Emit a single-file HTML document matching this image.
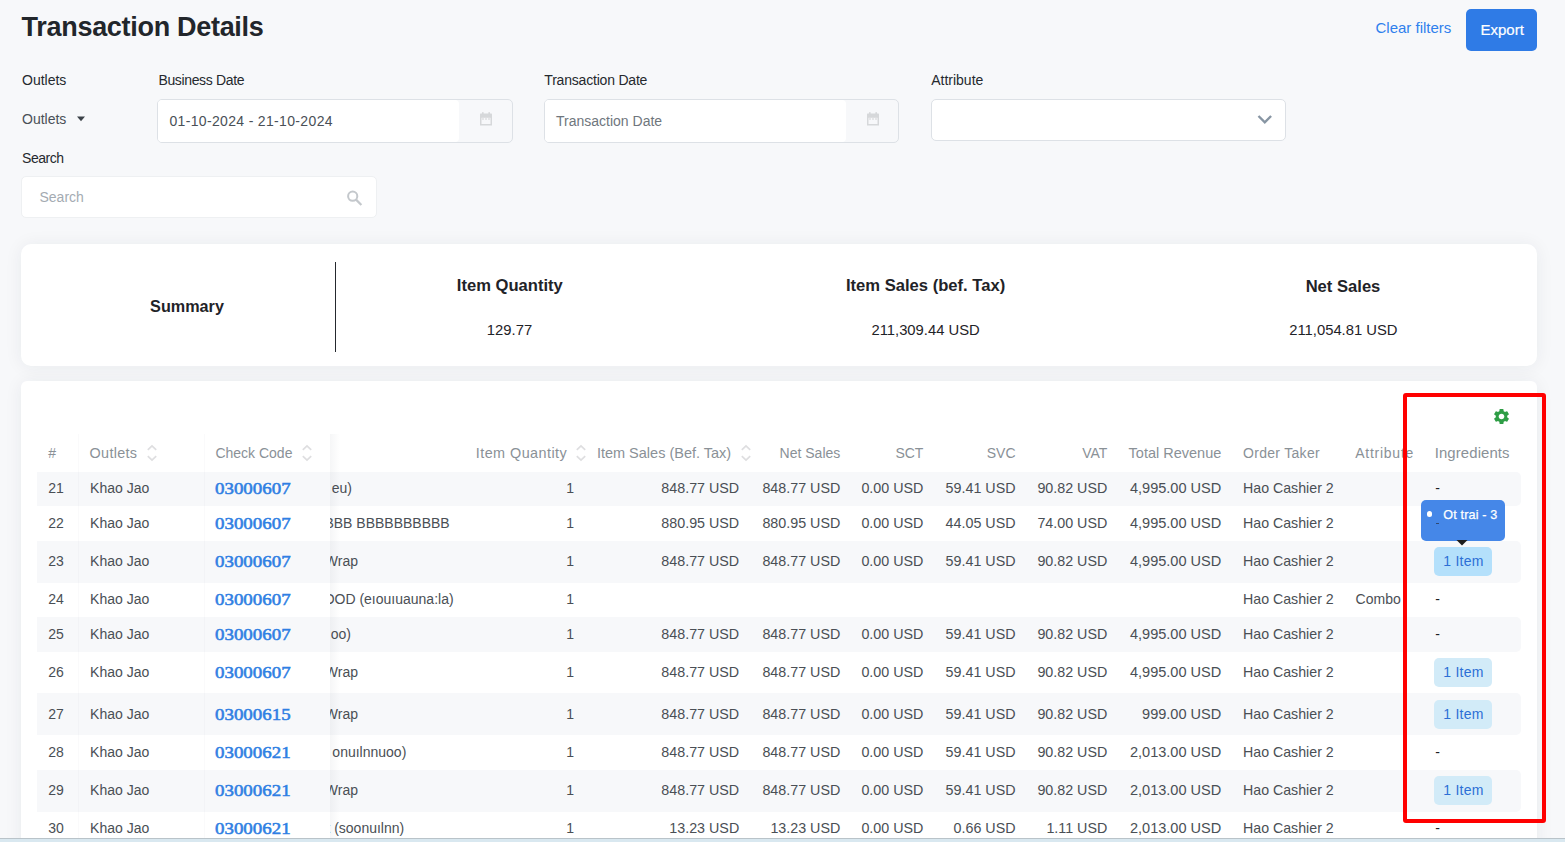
<!DOCTYPE html>
<html><head><meta charset="utf-8"><title>Transaction Details</title>
<style>
html,body{margin:0;padding:0;}
body{width:1565px;height:842px;overflow:hidden;position:relative;background:#f7f8fa;font-family:"Liberation Sans",sans-serif;}
.t{position:absolute;white-space:nowrap;}
.box{position:absolute;box-sizing:border-box;}
</style></head><body>
<div class="t" style="top:14.80px;font-size:27px;line-height:24px;color:#22262b;font-weight:700;letter-spacing:-0.3px;left:21.60px;">Transaction Details</div>
<div class="t" style="top:16.30px;font-size:15px;line-height:24px;color:#2f80ed;left:1375.50px;">Clear filters</div>
<div class="box" style="left:1466px;top:9px;width:71px;height:42px;background:#2f7be6;border-radius:5px;"></div>
<div class="t" style="top:17.60px;font-size:15px;line-height:24px;color:#ffffff;left:1480.50px;-webkit-text-stroke:0.2px #fff;">Export</div>
<div class="t" style="top:68.10px;font-size:14px;line-height:24px;color:#25292e;left:22.00px;">Outlets</div>
<div class="t" style="top:68.10px;font-size:14px;line-height:24px;color:#25292e;letter-spacing:-0.35px;left:158.40px;">Business Date</div>
<div class="t" style="top:68.10px;font-size:14px;line-height:24px;color:#25292e;letter-spacing:-0.2px;left:544.30px;">Transaction Date</div>
<div class="t" style="top:68.10px;font-size:14px;line-height:24px;color:#25292e;left:931.20px;">Attribute</div>
<div class="t" style="top:106.70px;font-size:14px;line-height:24px;color:#4a5057;left:22.00px;">Outlets</div>
<svg class="box" style="left:76px;top:116px" width="10" height="6"><path d="M1 0.5 L9 0.5 L5 5.2 Z" fill="#3c4248"/></svg>
<div class="box" style="left:157px;top:99px;width:356px;height:44px;border:1px solid #dde1e6;border-radius:5px;background:#f7f8fa;"></div>
<div class="box" style="left:158px;top:100px;width:301px;height:42px;background:#fff;border-radius:4px;"></div>
<div class="t" style="top:108.90px;font-size:14px;line-height:24px;color:#4a5057;letter-spacing:0.34px;left:169.40px;">01-10-2024 - 21-10-2024</div>
<svg class="box" style="left:479px;top:112px" width="14" height="14" viewBox="0 0 14 14"><path d="M1 2.2 Q1 1.6 1.6 1.6 L12.4 1.6 Q13 1.6 13 2.2 L13 13.4 L1 13.4 Z" fill="#d6d8da"/><rect x="2.5" y="5.8" width="9" height="6.2" fill="#f7f8fa"/><rect x="3.2" y="6.3" width="1.6" height="1.4" fill="#d6d8da"/><rect x="6.2" y="6.3" width="1.6" height="1.4" fill="#d6d8da"/><rect x="9.2" y="6.3" width="1.6" height="1.4" fill="#d6d8da"/><rect x="3" y="0.2" width="1.6" height="2" fill="#d6d8da"/><rect x="9.4" y="0.2" width="1.6" height="2" fill="#d6d8da"/></svg>
<div class="box" style="left:544px;top:99px;width:355px;height:44px;border:1px solid #dde1e6;border-radius:5px;background:#f7f8fa;"></div>
<div class="box" style="left:545px;top:100px;width:301px;height:42px;background:#fff;border-radius:4px;"></div>
<div class="t" style="top:108.90px;font-size:14px;line-height:24px;color:#6f767d;left:556.00px;">Transaction Date</div>
<svg class="box" style="left:866px;top:112px" width="14" height="14" viewBox="0 0 14 14"><path d="M1 2.2 Q1 1.6 1.6 1.6 L12.4 1.6 Q13 1.6 13 2.2 L13 13.4 L1 13.4 Z" fill="#d6d8da"/><rect x="2.5" y="5.8" width="9" height="6.2" fill="#f7f8fa"/><rect x="3.2" y="6.3" width="1.6" height="1.4" fill="#d6d8da"/><rect x="6.2" y="6.3" width="1.6" height="1.4" fill="#d6d8da"/><rect x="9.2" y="6.3" width="1.6" height="1.4" fill="#d6d8da"/><rect x="3" y="0.2" width="1.6" height="2" fill="#d6d8da"/><rect x="9.4" y="0.2" width="1.6" height="2" fill="#d6d8da"/></svg>
<div class="box" style="left:931px;top:99px;width:355px;height:42px;border:1px solid #dde1e6;border-radius:5px;background:#fff;"></div>
<svg class="box" style="left:1257px;top:114px" width="16" height="11"><path d="M1.5 2 L7.8 8.3 L14.1 2" fill="none" stroke="#8795a3" stroke-width="2.4"/></svg>
<div class="t" style="top:145.90px;font-size:14px;line-height:24px;color:#25292e;letter-spacing:-0.45px;left:22.00px;">Search</div>
<div class="box" style="left:21px;top:176px;width:356px;height:42px;border:1px solid #eef0f2;border-radius:5px;background:#fff;"></div>
<div class="t" style="top:185.00px;font-size:14px;line-height:24px;color:#a4abb2;left:39.50px;">Search</div>
<svg class="box" style="left:345px;top:189px" width="20" height="20"><circle cx="7.7" cy="7.2" r="4.6" fill="none" stroke="#c4c8cc" stroke-width="2"/><path d="M10.8 10.4 L16.4 16" stroke="#c4c8cc" stroke-width="2.2"/></svg>
<div class="box" style="left:21px;top:244px;width:1516px;height:122px;background:#fff;border-radius:10px;box-shadow:0 1px 18px rgba(30,40,60,0.065);"></div>
<div class="t" style="top:294.00px;font-size:16.2px;line-height:24px;color:#1f2328;font-weight:700;left:-113.00px;width:600px;text-align:center;">Summary</div>
<div class="box" style="left:335px;top:262px;width:1px;height:90px;background:#25292e;"></div>
<div class="t" style="top:274.30px;font-size:16.6px;line-height:24px;color:#1f2328;font-weight:700;left:209.80px;width:600px;text-align:center;">Item Quantity</div>
<div class="t" style="top:318.00px;font-size:14.8px;line-height:24px;color:#1f2328;left:209.50px;width:600px;text-align:center;">129.77</div>
<div class="t" style="top:274.40px;font-size:16.6px;line-height:24px;color:#1f2328;font-weight:700;left:625.60px;width:600px;text-align:center;">Item Sales (bef. Tax)</div>
<div class="t" style="top:318.20px;font-size:14.8px;line-height:24px;color:#1f2328;left:625.60px;width:600px;text-align:center;">211,309.44 USD</div>
<div class="t" style="top:274.70px;font-size:16.6px;line-height:24px;color:#1f2328;font-weight:700;left:1043.00px;width:600px;text-align:center;">Net Sales</div>
<div class="t" style="top:318.10px;font-size:14.8px;line-height:24px;color:#1f2328;left:1043.40px;width:600px;text-align:center;">211,054.81 USD</div>
<div class="box" style="left:21px;top:381px;width:1516px;height:480px;background:#fff;border-radius:6px;box-shadow:0 1px 18px rgba(30,40,60,0.065);"></div>
<svg class="box" style="left:1491.8px;top:406.9px" width="19" height="19" viewBox="0 0 24 24"><path fill="#2e9d45" d="M19.14 12.94c.04-.3.06-.61.06-.94 0-.32-.02-.64-.07-.94l2.03-1.58a.49.49 0 0 0 .12-.61l-1.92-3.32a.488.488 0 0 0-.59-.22l-2.39.96c-.5-.38-1.03-.7-1.62-.94l-.36-2.54a.484.484 0 0 0-.48-.41h-3.84c-.24 0-.43.17-.47.41l-.36 2.54c-.59.24-1.13.57-1.62.94l-2.39-.96c-.22-.08-.47 0-.59.22L2.74 8.87c-.12.21-.08.47.12.61l2.03 1.58c-.05.3-.09.63-.09.94s.02.64.07.94l-2.03 1.58a.49.49 0 0 0-.12.61l1.92 3.32c.12.22.37.29.59.22l2.39-.96c.5.38 1.03.7 1.62.94l.36 2.54c.05.24.24.41.48.41h3.84c.24 0 .44-.17.47-.41l.36-2.54c.59-.24 1.13-.56 1.62-.94l2.39.96c.22.08.47 0 .59-.22l1.92-3.32c.12-.22.07-.47-.12-.61l-2.01-1.58zM12 15.6c-1.98 0-3.6-1.62-3.6-3.6s1.62-3.6 3.6-3.6 3.6 1.62 3.6 3.6-1.62 3.6-3.6 3.6z"/></svg>
<div class="box" style="left:37px;top:472px;width:1484px;height:34px;background:#f7f8fa;border-radius:0 5px 5px 0;"></div>
<div class="box" style="left:37px;top:541px;width:1484px;height:42px;background:#f7f8fa;border-radius:0 5px 5px 0;"></div>
<div class="box" style="left:37px;top:617px;width:1484px;height:35px;background:#f7f8fa;border-radius:0 5px 5px 0;"></div>
<div class="box" style="left:37px;top:693px;width:1484px;height:42px;background:#f7f8fa;border-radius:0 5px 5px 0;"></div>
<div class="box" style="left:37px;top:770px;width:1484px;height:42px;background:#f7f8fa;border-radius:0 5px 5px 0;"></div>
<div class="t" style="top:476.00px;font-size:14px;line-height:24px;color:#4a4f55;right:1213.00px;">Set Khao Phat (Premium eu)</div>
<div class="t" style="top:511.20px;font-size:14px;line-height:24px;color:#4a4f55;right:1115.30px;">BBBBBBBBBBB BBB BBBBBBBBBB</div>
<div class="t" style="top:549.00px;font-size:14px;line-height:24px;color:#4a4f55;right:1207.00px;">Chicken Wrap</div>
<div class="t" style="top:587.00px;font-size:14px;line-height:24px;color:#4a4f55;right:1111.40px;">SEAFOOD (eıouıuauna:la)</div>
<div class="t" style="top:622.00px;font-size:14px;line-height:24px;color:#4a4f55;right:1214.00px;">Khao Man Kai (Kai oo)</div>
<div class="t" style="top:660.00px;font-size:14px;line-height:24px;color:#4a4f55;right:1207.00px;">Chicken Wrap</div>
<div class="t" style="top:702.00px;font-size:14px;line-height:24px;color:#4a4f55;right:1207.00px;">Chicken Wrap</div>
<div class="t" style="top:739.80px;font-size:14px;line-height:24px;color:#4a4f55;right:1158.70px;">Khao Rat Naa Kai onuılnnuoo)</div>
<div class="t" style="top:778.20px;font-size:14px;line-height:24px;color:#4a4f55;right:1207.00px;">Chicken Wrap</div>
<div class="t" style="top:815.80px;font-size:14px;line-height:24px;color:#4a4f55;right:1160.80px;">Khao Phat  (soonuılnn)</div>
<div class="box" style="left:330px;top:434px;width:10px;height:420px;background:linear-gradient(90deg,rgba(40,50,70,0.045),rgba(40,50,70,0));"></div>
<div class="box" style="left:37px;top:434px;width:293px;height:38px;background:#fff;"></div>
<div class="box" style="left:37px;top:472px;width:293px;height:34px;background:#f7f8fa;"></div>
<div class="box" style="left:37px;top:506px;width:293px;height:35px;background:#fff;"></div>
<div class="box" style="left:37px;top:541px;width:293px;height:42px;background:#f7f8fa;"></div>
<div class="box" style="left:37px;top:583px;width:293px;height:34px;background:#fff;"></div>
<div class="box" style="left:37px;top:617px;width:293px;height:35px;background:#f7f8fa;"></div>
<div class="box" style="left:37px;top:652px;width:293px;height:41px;background:#fff;"></div>
<div class="box" style="left:37px;top:693px;width:293px;height:42px;background:#f7f8fa;"></div>
<div class="box" style="left:37px;top:735px;width:293px;height:35px;background:#fff;"></div>
<div class="box" style="left:37px;top:770px;width:293px;height:42px;background:#f7f8fa;"></div>
<div class="box" style="left:37px;top:812px;width:293px;height:34px;background:#fff;"></div>
<div class="box" style="left:77.5px;top:434px;width:1px;height:420px;background:rgba(40,50,70,0.022);"></div>
<div class="box" style="left:203.5px;top:434px;width:1px;height:420px;background:rgba(40,50,70,0.022);"></div>
<div class="t" style="top:440.90px;font-size:14px;line-height:24px;color:#8a9197;left:48.20px;">#</div>
<div class="t" style="top:440.90px;font-size:14.4px;line-height:24px;color:#8a9197;letter-spacing:0.3px;left:89.60px;">Outlets</div>
<svg class="box" style="left:146.8px;top:444px" width="10" height="18" viewBox="0 0 10 18"><path d="M0.8 5.9 L5 1.9 L9.2 5.9" fill="none" stroke="#dedee0" stroke-width="1.7"/><path d="M0.8 12.1 L5 16.1 L9.2 12.1" fill="none" stroke="#dedee0" stroke-width="1.7"/></svg>
<div class="t" style="top:440.90px;font-size:14px;line-height:24px;color:#8a9197;left:215.40px;">Check Code</div>
<svg class="box" style="left:301.8px;top:444px" width="10" height="18" viewBox="0 0 10 18"><path d="M0.8 5.9 L5 1.9 L9.2 5.9" fill="none" stroke="#dedee0" stroke-width="1.7"/><path d="M0.8 12.1 L5 16.1 L9.2 12.1" fill="none" stroke="#dedee0" stroke-width="1.7"/></svg>
<div class="t" style="top:440.90px;font-size:14.4px;line-height:24px;color:#8a9197;letter-spacing:0.45px;right:997.80px;">Item Quantity</div>
<svg class="box" style="left:575.7px;top:444px" width="10" height="18" viewBox="0 0 10 18"><path d="M0.8 5.9 L5 1.9 L9.2 5.9" fill="none" stroke="#dedee0" stroke-width="1.7"/><path d="M0.8 12.1 L5 16.1 L9.2 12.1" fill="none" stroke="#dedee0" stroke-width="1.7"/></svg>
<div class="t" style="top:440.90px;font-size:14.5px;line-height:24px;color:#8a9197;right:833.80px;">Item Sales (Bef. Tax)</div>
<svg class="box" style="left:740.7px;top:444px" width="10" height="18" viewBox="0 0 10 18"><path d="M0.8 5.9 L5 1.9 L9.2 5.9" fill="none" stroke="#dedee0" stroke-width="1.7"/><path d="M0.8 12.1 L5 16.1 L9.2 12.1" fill="none" stroke="#dedee0" stroke-width="1.7"/></svg>
<div class="t" style="top:440.90px;font-size:14px;line-height:24px;color:#8a9197;right:724.70px;">Net Sales</div>
<div class="t" style="top:440.90px;font-size:14px;line-height:24px;color:#8a9197;right:641.60px;">SCT</div>
<div class="t" style="top:440.90px;font-size:14px;line-height:24px;color:#8a9197;right:549.50px;">SVC</div>
<div class="t" style="top:440.90px;font-size:14px;line-height:24px;color:#8a9197;right:457.70px;">VAT</div>
<div class="t" style="top:440.90px;font-size:14.5px;line-height:24px;color:#8a9197;right:343.70px;">Total Revenue</div>
<div class="t" style="top:440.90px;font-size:14px;line-height:24px;color:#8a9197;letter-spacing:0.3px;left:1243.00px;">Order Taker</div>
<div class="t" style="top:440.90px;font-size:14px;line-height:24px;color:#8a9197;letter-spacing:0.75px;left:1355.20px;">Attribute</div>
<div class="t" style="top:440.90px;font-size:14.9px;line-height:24px;color:#8a9197;letter-spacing:0.12px;left:1434.70px;">Ingredients</div>
<div class="t" style="top:476.00px;font-size:14px;line-height:24px;color:#4a4f55;left:48.30px;">21</div>
<div class="t" style="top:476.00px;font-size:14px;line-height:24px;color:#4a4f55;left:90.10px;">Khao Jao</div>
<div class="t" style="top:477.10px;font-size:17.2px;line-height:24px;color:#2f7fe3;font-family:'Liberation Serif',serif;left:215.20px;transform:scaleX(1.1);transform-origin:0 0;-webkit-text-stroke:0.55px #2f7fe3;">03000607</div>
<div class="t" style="top:476.00px;font-size:14px;line-height:24px;color:#4a4f55;right:991.00px;">1</div>
<div class="t" style="top:476.00px;font-size:14.3px;line-height:24px;color:#4a4f55;right:825.80px;">848.77 USD</div>
<div class="t" style="top:476.00px;font-size:14.3px;line-height:24px;color:#4a4f55;right:724.70px;">848.77 USD</div>
<div class="t" style="top:476.00px;font-size:14.3px;line-height:24px;color:#4a4f55;right:641.60px;">0.00 USD</div>
<div class="t" style="top:476.00px;font-size:14.3px;line-height:24px;color:#4a4f55;right:549.50px;">59.41 USD</div>
<div class="t" style="top:476.00px;font-size:14.3px;line-height:24px;color:#4a4f55;right:457.70px;">90.82 USD</div>
<div class="t" style="top:476.00px;font-size:14.55px;line-height:24px;color:#4a4f55;right:343.70px;">4,995.00 USD</div>
<div class="t" style="top:476.00px;font-size:14.2px;line-height:24px;color:#4a4f55;left:1243.00px;">Hao Cashier 2</div>
<div class="t" style="top:476.00px;font-size:14px;line-height:24px;color:#1d2024;left:1435.30px;">-</div>
<div class="t" style="top:511.20px;font-size:14px;line-height:24px;color:#4a4f55;left:48.30px;">22</div>
<div class="t" style="top:511.20px;font-size:14px;line-height:24px;color:#4a4f55;left:90.10px;">Khao Jao</div>
<div class="t" style="top:512.30px;font-size:17.2px;line-height:24px;color:#2f7fe3;font-family:'Liberation Serif',serif;left:215.20px;transform:scaleX(1.1);transform-origin:0 0;-webkit-text-stroke:0.55px #2f7fe3;">03000607</div>
<div class="t" style="top:511.20px;font-size:14px;line-height:24px;color:#4a4f55;right:991.00px;">1</div>
<div class="t" style="top:511.20px;font-size:14.3px;line-height:24px;color:#4a4f55;right:825.80px;">880.95 USD</div>
<div class="t" style="top:511.20px;font-size:14.3px;line-height:24px;color:#4a4f55;right:724.70px;">880.95 USD</div>
<div class="t" style="top:511.20px;font-size:14.3px;line-height:24px;color:#4a4f55;right:641.60px;">0.00 USD</div>
<div class="t" style="top:511.20px;font-size:14.3px;line-height:24px;color:#4a4f55;right:549.50px;">44.05 USD</div>
<div class="t" style="top:511.20px;font-size:14.3px;line-height:24px;color:#4a4f55;right:457.70px;">74.00 USD</div>
<div class="t" style="top:511.20px;font-size:14.55px;line-height:24px;color:#4a4f55;right:343.70px;">4,995.00 USD</div>
<div class="t" style="top:511.20px;font-size:14.2px;line-height:24px;color:#4a4f55;left:1243.00px;">Hao Cashier 2</div>
<div class="t" style="top:511.20px;font-size:14px;line-height:24px;color:#1d2024;left:1435.30px;">-</div>
<div class="t" style="top:549.00px;font-size:14px;line-height:24px;color:#4a4f55;left:48.30px;">23</div>
<div class="t" style="top:549.00px;font-size:14px;line-height:24px;color:#4a4f55;left:90.10px;">Khao Jao</div>
<div class="t" style="top:550.10px;font-size:17.2px;line-height:24px;color:#2f7fe3;font-family:'Liberation Serif',serif;left:215.20px;transform:scaleX(1.1);transform-origin:0 0;-webkit-text-stroke:0.55px #2f7fe3;">03000607</div>
<div class="t" style="top:549.00px;font-size:14px;line-height:24px;color:#4a4f55;right:991.00px;">1</div>
<div class="t" style="top:549.00px;font-size:14.3px;line-height:24px;color:#4a4f55;right:825.80px;">848.77 USD</div>
<div class="t" style="top:549.00px;font-size:14.3px;line-height:24px;color:#4a4f55;right:724.70px;">848.77 USD</div>
<div class="t" style="top:549.00px;font-size:14.3px;line-height:24px;color:#4a4f55;right:641.60px;">0.00 USD</div>
<div class="t" style="top:549.00px;font-size:14.3px;line-height:24px;color:#4a4f55;right:549.50px;">59.41 USD</div>
<div class="t" style="top:549.00px;font-size:14.3px;line-height:24px;color:#4a4f55;right:457.70px;">90.82 USD</div>
<div class="t" style="top:549.00px;font-size:14.55px;line-height:24px;color:#4a4f55;right:343.70px;">4,995.00 USD</div>
<div class="t" style="top:549.00px;font-size:14.2px;line-height:24px;color:#4a4f55;left:1243.00px;">Hao Cashier 2</div>
<div class="box" style="left:1434.4px;top:547px;width:57.6px;height:29px;background:#b4e0fb;border-radius:5px;"></div>
<div class="t" style="top:549.00px;font-size:14px;line-height:24px;color:#2c6fd6;letter-spacing:0.25px;left:1443.30px;">1 Item</div>
<div class="t" style="top:587.00px;font-size:14px;line-height:24px;color:#4a4f55;left:48.30px;">24</div>
<div class="t" style="top:587.00px;font-size:14px;line-height:24px;color:#4a4f55;left:90.10px;">Khao Jao</div>
<div class="t" style="top:588.10px;font-size:17.2px;line-height:24px;color:#2f7fe3;font-family:'Liberation Serif',serif;left:215.20px;transform:scaleX(1.1);transform-origin:0 0;-webkit-text-stroke:0.55px #2f7fe3;">03000607</div>
<div class="t" style="top:587.00px;font-size:14px;line-height:24px;color:#4a4f55;right:991.00px;">1</div>
<div class="t" style="top:587.00px;font-size:14.2px;line-height:24px;color:#4a4f55;left:1243.00px;">Hao Cashier 2</div>
<div class="t" style="top:587.00px;font-size:14px;line-height:24px;color:#4a4f55;left:1355.60px;">Combo</div>
<div class="t" style="top:587.00px;font-size:14px;line-height:24px;color:#1d2024;left:1435.30px;">-</div>
<div class="t" style="top:622.00px;font-size:14px;line-height:24px;color:#4a4f55;left:48.30px;">25</div>
<div class="t" style="top:622.00px;font-size:14px;line-height:24px;color:#4a4f55;left:90.10px;">Khao Jao</div>
<div class="t" style="top:623.10px;font-size:17.2px;line-height:24px;color:#2f7fe3;font-family:'Liberation Serif',serif;left:215.20px;transform:scaleX(1.1);transform-origin:0 0;-webkit-text-stroke:0.55px #2f7fe3;">03000607</div>
<div class="t" style="top:622.00px;font-size:14px;line-height:24px;color:#4a4f55;right:991.00px;">1</div>
<div class="t" style="top:622.00px;font-size:14.3px;line-height:24px;color:#4a4f55;right:825.80px;">848.77 USD</div>
<div class="t" style="top:622.00px;font-size:14.3px;line-height:24px;color:#4a4f55;right:724.70px;">848.77 USD</div>
<div class="t" style="top:622.00px;font-size:14.3px;line-height:24px;color:#4a4f55;right:641.60px;">0.00 USD</div>
<div class="t" style="top:622.00px;font-size:14.3px;line-height:24px;color:#4a4f55;right:549.50px;">59.41 USD</div>
<div class="t" style="top:622.00px;font-size:14.3px;line-height:24px;color:#4a4f55;right:457.70px;">90.82 USD</div>
<div class="t" style="top:622.00px;font-size:14.55px;line-height:24px;color:#4a4f55;right:343.70px;">4,995.00 USD</div>
<div class="t" style="top:622.00px;font-size:14.2px;line-height:24px;color:#4a4f55;left:1243.00px;">Hao Cashier 2</div>
<div class="t" style="top:622.00px;font-size:14px;line-height:24px;color:#1d2024;left:1435.30px;">-</div>
<div class="t" style="top:660.00px;font-size:14px;line-height:24px;color:#4a4f55;left:48.30px;">26</div>
<div class="t" style="top:660.00px;font-size:14px;line-height:24px;color:#4a4f55;left:90.10px;">Khao Jao</div>
<div class="t" style="top:661.10px;font-size:17.2px;line-height:24px;color:#2f7fe3;font-family:'Liberation Serif',serif;left:215.20px;transform:scaleX(1.1);transform-origin:0 0;-webkit-text-stroke:0.55px #2f7fe3;">03000607</div>
<div class="t" style="top:660.00px;font-size:14px;line-height:24px;color:#4a4f55;right:991.00px;">1</div>
<div class="t" style="top:660.00px;font-size:14.3px;line-height:24px;color:#4a4f55;right:825.80px;">848.77 USD</div>
<div class="t" style="top:660.00px;font-size:14.3px;line-height:24px;color:#4a4f55;right:724.70px;">848.77 USD</div>
<div class="t" style="top:660.00px;font-size:14.3px;line-height:24px;color:#4a4f55;right:641.60px;">0.00 USD</div>
<div class="t" style="top:660.00px;font-size:14.3px;line-height:24px;color:#4a4f55;right:549.50px;">59.41 USD</div>
<div class="t" style="top:660.00px;font-size:14.3px;line-height:24px;color:#4a4f55;right:457.70px;">90.82 USD</div>
<div class="t" style="top:660.00px;font-size:14.55px;line-height:24px;color:#4a4f55;right:343.70px;">4,995.00 USD</div>
<div class="t" style="top:660.00px;font-size:14.2px;line-height:24px;color:#4a4f55;left:1243.00px;">Hao Cashier 2</div>
<div class="box" style="left:1434.4px;top:658px;width:57.6px;height:29px;background:#d2ebf8;border-radius:5px;"></div>
<div class="t" style="top:660.00px;font-size:14px;line-height:24px;color:#2c6fd6;letter-spacing:0.25px;left:1443.30px;">1 Item</div>
<div class="t" style="top:702.00px;font-size:14px;line-height:24px;color:#4a4f55;left:48.30px;">27</div>
<div class="t" style="top:702.00px;font-size:14px;line-height:24px;color:#4a4f55;left:90.10px;">Khao Jao</div>
<div class="t" style="top:703.10px;font-size:17.2px;line-height:24px;color:#2f7fe3;font-family:'Liberation Serif',serif;left:215.20px;transform:scaleX(1.1);transform-origin:0 0;-webkit-text-stroke:0.55px #2f7fe3;">03000615</div>
<div class="t" style="top:702.00px;font-size:14px;line-height:24px;color:#4a4f55;right:991.00px;">1</div>
<div class="t" style="top:702.00px;font-size:14.3px;line-height:24px;color:#4a4f55;right:825.80px;">848.77 USD</div>
<div class="t" style="top:702.00px;font-size:14.3px;line-height:24px;color:#4a4f55;right:724.70px;">848.77 USD</div>
<div class="t" style="top:702.00px;font-size:14.3px;line-height:24px;color:#4a4f55;right:641.60px;">0.00 USD</div>
<div class="t" style="top:702.00px;font-size:14.3px;line-height:24px;color:#4a4f55;right:549.50px;">59.41 USD</div>
<div class="t" style="top:702.00px;font-size:14.3px;line-height:24px;color:#4a4f55;right:457.70px;">90.82 USD</div>
<div class="t" style="top:702.00px;font-size:14.55px;line-height:24px;color:#4a4f55;right:343.70px;">999.00 USD</div>
<div class="t" style="top:702.00px;font-size:14.2px;line-height:24px;color:#4a4f55;left:1243.00px;">Hao Cashier 2</div>
<div class="box" style="left:1434.4px;top:700px;width:57.6px;height:29px;background:#d2ebf8;border-radius:5px;"></div>
<div class="t" style="top:702.00px;font-size:14px;line-height:24px;color:#2c6fd6;letter-spacing:0.25px;left:1443.30px;">1 Item</div>
<div class="t" style="top:739.80px;font-size:14px;line-height:24px;color:#4a4f55;left:48.30px;">28</div>
<div class="t" style="top:739.80px;font-size:14px;line-height:24px;color:#4a4f55;left:90.10px;">Khao Jao</div>
<div class="t" style="top:740.90px;font-size:17.2px;line-height:24px;color:#2f7fe3;font-family:'Liberation Serif',serif;left:215.20px;transform:scaleX(1.1);transform-origin:0 0;-webkit-text-stroke:0.55px #2f7fe3;">03000621</div>
<div class="t" style="top:739.80px;font-size:14px;line-height:24px;color:#4a4f55;right:991.00px;">1</div>
<div class="t" style="top:739.80px;font-size:14.3px;line-height:24px;color:#4a4f55;right:825.80px;">848.77 USD</div>
<div class="t" style="top:739.80px;font-size:14.3px;line-height:24px;color:#4a4f55;right:724.70px;">848.77 USD</div>
<div class="t" style="top:739.80px;font-size:14.3px;line-height:24px;color:#4a4f55;right:641.60px;">0.00 USD</div>
<div class="t" style="top:739.80px;font-size:14.3px;line-height:24px;color:#4a4f55;right:549.50px;">59.41 USD</div>
<div class="t" style="top:739.80px;font-size:14.3px;line-height:24px;color:#4a4f55;right:457.70px;">90.82 USD</div>
<div class="t" style="top:739.80px;font-size:14.55px;line-height:24px;color:#4a4f55;right:343.70px;">2,013.00 USD</div>
<div class="t" style="top:739.80px;font-size:14.2px;line-height:24px;color:#4a4f55;left:1243.00px;">Hao Cashier 2</div>
<div class="t" style="top:739.80px;font-size:14px;line-height:24px;color:#1d2024;left:1435.30px;">-</div>
<div class="t" style="top:778.20px;font-size:14px;line-height:24px;color:#4a4f55;left:48.30px;">29</div>
<div class="t" style="top:778.20px;font-size:14px;line-height:24px;color:#4a4f55;left:90.10px;">Khao Jao</div>
<div class="t" style="top:779.30px;font-size:17.2px;line-height:24px;color:#2f7fe3;font-family:'Liberation Serif',serif;left:215.20px;transform:scaleX(1.1);transform-origin:0 0;-webkit-text-stroke:0.55px #2f7fe3;">03000621</div>
<div class="t" style="top:778.20px;font-size:14px;line-height:24px;color:#4a4f55;right:991.00px;">1</div>
<div class="t" style="top:778.20px;font-size:14.3px;line-height:24px;color:#4a4f55;right:825.80px;">848.77 USD</div>
<div class="t" style="top:778.20px;font-size:14.3px;line-height:24px;color:#4a4f55;right:724.70px;">848.77 USD</div>
<div class="t" style="top:778.20px;font-size:14.3px;line-height:24px;color:#4a4f55;right:641.60px;">0.00 USD</div>
<div class="t" style="top:778.20px;font-size:14.3px;line-height:24px;color:#4a4f55;right:549.50px;">59.41 USD</div>
<div class="t" style="top:778.20px;font-size:14.3px;line-height:24px;color:#4a4f55;right:457.70px;">90.82 USD</div>
<div class="t" style="top:778.20px;font-size:14.55px;line-height:24px;color:#4a4f55;right:343.70px;">2,013.00 USD</div>
<div class="t" style="top:778.20px;font-size:14.2px;line-height:24px;color:#4a4f55;left:1243.00px;">Hao Cashier 2</div>
<div class="box" style="left:1434.4px;top:776px;width:57.6px;height:29px;background:#d2ebf8;border-radius:5px;"></div>
<div class="t" style="top:778.20px;font-size:14px;line-height:24px;color:#2c6fd6;letter-spacing:0.25px;left:1443.30px;">1 Item</div>
<div class="t" style="top:815.80px;font-size:14px;line-height:24px;color:#4a4f55;left:48.30px;">30</div>
<div class="t" style="top:815.80px;font-size:14px;line-height:24px;color:#4a4f55;left:90.10px;">Khao Jao</div>
<div class="t" style="top:816.90px;font-size:17.2px;line-height:24px;color:#2f7fe3;font-family:'Liberation Serif',serif;left:215.20px;transform:scaleX(1.1);transform-origin:0 0;-webkit-text-stroke:0.55px #2f7fe3;">03000621</div>
<div class="t" style="top:815.80px;font-size:14px;line-height:24px;color:#4a4f55;right:991.00px;">1</div>
<div class="t" style="top:815.80px;font-size:14.3px;line-height:24px;color:#4a4f55;right:825.80px;">13.23 USD</div>
<div class="t" style="top:815.80px;font-size:14.3px;line-height:24px;color:#4a4f55;right:724.70px;">13.23 USD</div>
<div class="t" style="top:815.80px;font-size:14.3px;line-height:24px;color:#4a4f55;right:641.60px;">0.00 USD</div>
<div class="t" style="top:815.80px;font-size:14.3px;line-height:24px;color:#4a4f55;right:549.50px;">0.66 USD</div>
<div class="t" style="top:815.80px;font-size:14.3px;line-height:24px;color:#4a4f55;right:457.70px;">1.11 USD</div>
<div class="t" style="top:815.80px;font-size:14.55px;line-height:24px;color:#4a4f55;right:343.70px;">2,013.00 USD</div>
<div class="t" style="top:815.80px;font-size:14.2px;line-height:24px;color:#4a4f55;left:1243.00px;">Hao Cashier 2</div>
<div class="t" style="top:815.80px;font-size:14px;line-height:24px;color:#1d2024;left:1435.30px;">-</div>
<div class="box" style="left:1421px;top:499.5px;width:84px;height:41px;background:#4587e8;border-radius:5px;"></div>
<svg class="box" style="left:1456px;top:540px" width="12" height="6"><path d="M0.5 0 L11.5 0 L6 5.5 Z" fill="#1e1e1e"/></svg>
<div class="box" style="left:1426.6px;top:511.4px;width:5.4px;height:5.4px;background:#fff;border-radius:50%;"></div>
<div class="t" style="top:503.00px;font-size:12.6px;line-height:24px;color:#ffffff;letter-spacing:0.15px;left:1443.30px;-webkit-text-stroke:0.25px #fff;">Ot trai - 3</div>
<div class="box" style="left:1435.5px;top:522.6px;width:3.5px;height:1.1px;background:#2a3a55;opacity:0.8;"></div>
<div class="box" style="left:1403.4px;top:393px;width:142.8px;height:430.3px;border:4.4px solid #ff0000;border-radius:3px;"></div>
<div class="box" style="left:0;top:838px;width:1565px;height:1.3px;background:#b9c3c9;"></div>
<div class="box" style="left:0;top:839.3px;width:1565px;height:3px;background:#d9e8f0;"></div>
</body></html>
